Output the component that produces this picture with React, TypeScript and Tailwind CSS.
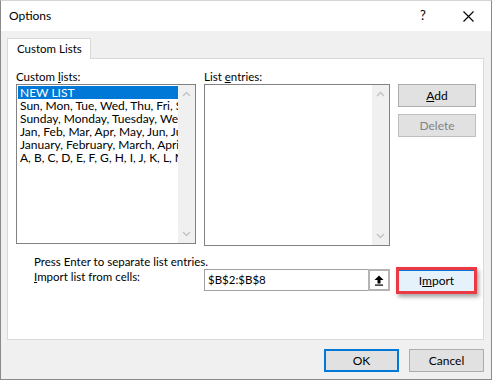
import React from 'react';

const font = { fontFamily: 'Lato, "Liberation Sans", sans-serif' };

const customLists = [
  'NEW LIST',
  'Sun, Mon, Tue, Wed, Thu, Fri, Sat',
  'Sunday, Monday, Tuesday, Wednesday',
  'Jan, Feb, Mar, Apr, May, Jun, Jul',
  'January, February, March, April',
  'A, B, C, D, E, F, G, H, I, J, K, L, M',
];

const ScrollTrack: React.FC = () => (
  <div className="w-[17px] h-full bg-[#f0f0f0] flex flex-col justify-between items-center py-[6px] shrink-0">
    <svg width="9" height="6" viewBox="0 0 9 6">
      <polyline points="1,5 4.5,1.5 8,5" fill="none" stroke="#c2c2c2" strokeWidth="1.3" />
    </svg>
    <svg width="9" height="6" viewBox="0 0 9 6">
      <polyline points="1,1 4.5,4.5 8,1" fill="none" stroke="#c2c2c2" strokeWidth="1.3" />
    </svg>
  </div>
);

const App: React.FC = () => {
  return (
    <div
      className="w-[492px] h-[380px] flex flex-col border-x border-b border-t border-[#8a8a8a] border-t-[#d4d4d4] text-[11.5px] text-black bg-[#f0f0f0] overflow-hidden"
      style={font}
    >
      {/* Title bar */}
      <div className="h-[30px] bg-white flex items-center pl-[8px] shrink-0 text-[12px]">
        <span className="flex-1">Options</span>
        <span className="w-[6px] mr-[37px] text-[13px]">?</span>
        <svg width="11" height="11" viewBox="0 0 11 11" className="mr-[17px]">
          <path d="M0.5 0.5 L10.5 10.5 M10.5 0.5 L0.5 10.5" stroke="#000" strokeWidth="1.1" />
        </svg>
      </div>

      {/* Body */}
      <div className="flex-1 flex flex-col pt-[7px] pl-[6px] pr-[7px]">
        <div className="relative z-10 -mb-px w-[84px] h-[21px] bg-white border border-b-0 border-[#d9d9d9] pl-[9px] leading-[20px]">
          Custom Lists
        </div>
        <div className="h-[282px] bg-white border border-[#d9d9d9] pl-[8px] pt-[10px]">
          <div className="flex">
            {/* Custom lists */}
            <div className="flex flex-col w-[180px]">
              <div className="leading-[15px]">
                Custom <span className="underline">l</span>ists:
              </div>
              <div className="h-[160px] border border-[#828282] flex">
                <div className="flex-1 min-w-0 pt-px pl-px overflow-hidden text-[12px]">
                  {customLists.map((item, i) => (
                    <div
                      key={item}
                      className={
                        i === 0
                          ? 'h-[13px] leading-[13px] pl-[2px] bg-[#0078d7] text-white whitespace-nowrap overflow-hidden'
                          : 'h-[13px] leading-[13px] pl-[2px] whitespace-nowrap overflow-hidden'
                      }
                    >
                      {item}
                    </div>
                  ))}
                </div>
                <ScrollTrack />
              </div>
            </div>

            {/* List entries */}
            <div className="flex flex-col w-[186px] ml-[8px]">
              <div className="leading-[15px]">
                List <span className="underline">e</span>ntries:
              </div>
              <div className="h-[162px] border border-[#828282] flex">
                <div className="flex-1" />
                <ScrollTrack />
              </div>
            </div>

            {/* Buttons */}
            <div className="flex flex-col gap-[7px] ml-[8px] pt-[15px]">
              <button className="w-[78px] h-[23px] bg-[#e1e1e1] border border-[#adadad] text-[12px]">
                <span className="underline">A</span>dd
              </button>
              <button className="w-[78px] h-[23px] bg-[#e1e1e1] border border-[#bfbfbf] text-[#838383] text-[12px]">
                Delete
              </button>
            </div>
          </div>

          {/* Import area */}
          <div className="pl-[18px] mt-[9px]">
            <div className="leading-[14px]">Press Enter to separate list entries.</div>
            <div className="flex items-start">
              <div className="w-[170px] leading-[14px] mt-px">
                <span className="underline">I</span>mport list from cells:
              </div>
              <div className="w-[186px] h-[22px] border border-[#a0a0a0] flex">
                <div className="flex-1 pl-[3px] leading-[20px]">$B$2:$B$8</div>
                <div className="w-[22px] h-[22px] -mt-px -mr-px border-2 border-[#b4b4b4] bg-white flex items-center justify-center">
                  <svg width="10" height="11" viewBox="0 0 10 11">
                    <path d="M5 0.5 L9.5 5 L6.5 5 L6.5 8.5 L3.5 8.5 L3.5 5 L0.5 5 Z" fill="#000" />
                    <rect x="1" y="9.5" width="8" height="1.2" fill="#000" />
                  </svg>
                </div>
              </div>
              <div className="ml-[6px] -mt-[2px] w-[81px] h-[27px] border-[3px] border-[#ec3a45] shadow-[2px_3px_4px_rgba(0,0,0,0.35)]">
                <button className="w-full h-full bg-[#e5f1fb] border-t border-[#0078d7] leading-[18px] text-[12px]">
                  I<span className="underline">m</span>port
                </button>
              </div>
            </div>
          </div>
        </div>

        {/* Footer buttons */}
        <div className="flex justify-end gap-[10px] mt-[9px]">
          <button className="w-[75px] h-[23px] bg-[#e1e1e1] border-2 border-[#0078d7] text-[12px]">OK</button>
          <button className="w-[75px] h-[23px] bg-[#e1e1e1] border border-[#adadad] text-[12px]">Cancel</button>
        </div>
      </div>
    </div>
  );
};

export default App;
